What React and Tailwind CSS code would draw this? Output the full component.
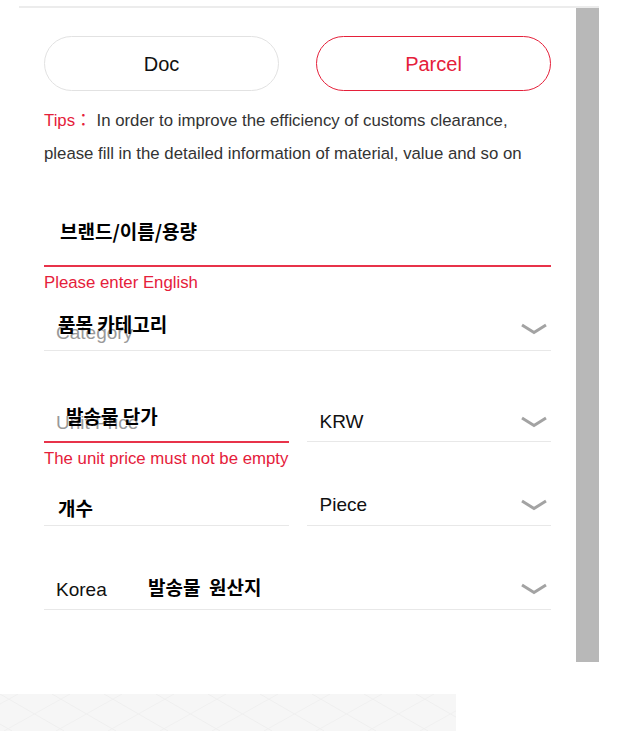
import React from "react";

const RED = "text-[#e5203a]";

function Chevron({ className = "" }) {
  return (
    <svg
      width="28"
      height="13"
      viewBox="0 0 28 13"
      className={"absolute right-[3px] top-1/2 -translate-y-1/2 " + className}
    >
      <polyline
        points="2,2.5 14,10 26,2.5"
        fill="none"
        stroke="#a3a3a3"
        strokeWidth="3"
        strokeLinejoin="miter"
      />
    </svg>
  );
}

function Overlay({ children, className }) {
  return (
    <span
      className={
        "absolute font-['Noto_Sans_CJK_KR','Noto_Sans_CJK_SC',sans-serif] font-bold text-[19px] leading-[22px] text-black whitespace-pre " +
        className
      }
    >
      {children}
    </span>
  );
}

function Pattern() {
  const lines = [];
  for (let i = -4; i < 14; i++) {
    const x = i * 52;
    lines.push(
      <line key={"a" + i} x1={x} y1={0} x2={x + 64} y2={37} stroke="#efefef" strokeWidth="1" />
    );
    lines.push(
      <line key={"b" + i} x1={x + 70} y1={0} x2={x + 4} y2={37} stroke="#f0f0f0" strokeWidth="1" />
    );
  }
  return (
    <svg width="456" height="37" viewBox="0 0 456 37" className="block">
      <rect width="456" height="37" fill="#f6f6f6" />
      {lines}
    </svg>
  );
}

export default function App() {
  return (
    <div className="w-[640px] h-[731px] bg-white overflow-hidden font-['Liberation_Sans','Noto_Sans_CJK_KR',sans-serif]">
      <div className="ml-[19px] mt-[6px] w-[580px] border-t-2 border-[#ececec] flex">
        <div className="w-[557px] h-[654px] px-[25px] pt-[28px]">
          {/* Doc / Parcel */}
          <div className="grid grid-cols-2 gap-[37px]">
            <div className="h-[55px] rounded-[28px] border border-[#e2e2e2] flex items-center justify-center text-[20px] text-[#111]">
              Doc
            </div>
            <div className={"h-[55px] rounded-[28px] border border-[#e5203a] flex items-center justify-center text-[20px] " + RED}>
              Parcel
            </div>
          </div>

          {/* Tips */}
          <p className="mt-[13px] text-[16.8px] leading-[33px] text-[#333]">
            <span className={RED}>Tips：</span> In order to improve the efficiency of customs clearance,
            <br />
            please fill in the detailed information of material, value and so on
          </p>

          {/* Brand */}
          <div className="relative mt-[55px] h-[42px] border-b-2 border-[#e8334a]">
            <Overlay className="left-[16px] top-[-5px]">브랜드/이름/용량</Overlay>
          </div>
          <div className={"mt-[7px] text-[16.8px] leading-[18px] " + RED}>Please enter English</div>

          {/* Category */}
          <div className="relative mt-[18px] h-[41px] border-b border-[#e8e8e8] flex items-center pt-[6px] pl-[12px]">
            <span className="text-[19px] text-[#999]">Category</span>
            <Overlay className="left-[14px] top-[3px]">품목 카테고리</Overlay>
            <Chevron className="-mt-[1px]" />
          </div>

          {/* Unit price / KRW */}
          <div className="mt-[50px] grid grid-cols-2 gap-[18px]">
            <div>
              <div className="relative h-[42px] border-b-2 border-[#e8334a] flex items-center pt-[5px] pl-[12px]">
                <span className="text-[19px] text-[#999]">Unit Price</span>
                <Overlay className="left-[22px] top-[4px]">발송물 단가</Overlay>
              </div>
              <div className={"mt-[7px] text-[16.8px] leading-[18px] whitespace-nowrap " + RED}>
                The unit price must not be empty
              </div>
            </div>
            <div className="relative h-[41px] border-b border-[#e8e8e8] flex items-center pt-[3px] pl-[13px]">
              <span className="text-[19px] text-[#111]">KRW</span>
              <Chevron className="mt-[1px]" />
            </div>
          </div>

          {/* Count / Piece */}
          <div className="mt-[17px] grid grid-cols-2 gap-[18px]">
            <div className="relative h-[41px] border-b border-[#e8e8e8]">
              <Overlay className="left-[14px] top-[12px]">개수</Overlay>
            </div>
            <div className="relative h-[41px] border-b border-[#e8e8e8] flex items-center pt-[1px] pl-[13px]">
              <span className="text-[19px] text-[#111]">Piece</span>
              <Chevron />
            </div>
          </div>

          {/* Country */}
          <div className="relative mt-[43px] h-[41px] border-b border-[#e8e8e8] flex items-center pt-[2px] pl-[12px]">
            <span className="text-[19px] text-[#111]">Korea</span>
            <Overlay className="left-[104px] top-[7px]">발송물  원산지</Overlay>
            <Chevron />
          </div>
        </div>
        <div className="w-[23px] h-[654px] bg-[#b8b8b8]" />
      </div>

      <div className="mt-[32px]">
        <Pattern />
      </div>
    </div>
  );
}
